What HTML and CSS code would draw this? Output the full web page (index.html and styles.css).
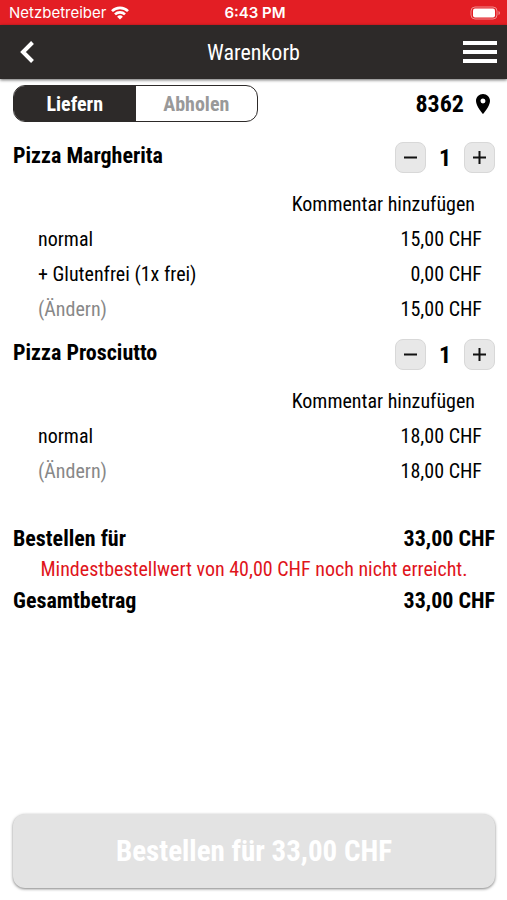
FILE: index.html
```html
<!DOCTYPE html>
<html lang="de">
<head>
  <meta charset="UTF-8">
  <meta name="viewport" content="width=device-width, initial-scale=1.0">
  <title>Warenkorb</title>
  <link rel="stylesheet" href="styles.css">
</head>
<body>
  <!-- Status bar -->
  <div class="statusbar">
    <span class="carrier">
      Netzbetreiber
      <svg width="18" height="14" viewBox="0 0 18 14" fill="none" stroke="#fff" stroke-width="2.6">
        <path d="M1 5.2a11.3 11.3 0 0 1 16 0"/>
        <path d="M4 8.4a7.1 7.1 0 0 1 10 0"/>
        <path d="M9 13.6l-2.9-2.9a4.1 4.1 0 0 1 5.8 0z" fill="#fff" stroke="none"/>
      </svg>
    </span>
    <span class="time">6:43 PM</span>
    <svg class="battery" width="31" height="14" viewBox="0 0 31 14">
      <rect x="1" y="1" width="26" height="12" rx="4" fill="none" stroke="#f08a8d"/>
      <rect x="3" y="2.500" width="22" height="9" rx="2" fill="#fff"/>
      <path d="M28.5 5v4q1.5-.6 1.5-2t-1.5-2z" fill="#f08a8d"/>
    </svg>
  </div>

  <!-- Header -->
  <header class="header">
    <button class="icon-btn" type="button" aria-label="Zurück">
      <svg width="16" height="24" viewBox="0 0 16 24" fill="none" stroke="#fff" stroke-width="4">
        <path d="M13.500 2.500L4 12l9.500 9.500"/>
      </svg>
    </button>
    <h1>Warenkorb</h1>
    <button class="icon-btn menu" type="button" aria-label="Menü">
      <svg width="34" height="24" viewBox="0 0 34 24" fill="#fff">
        <path d="M0 1h34v4H0zM0 10h34v4H0zM0 19h34v4H0z"/>
      </svg>
    </button>
  </header>

  <main class="cart">
    <div class="delivery">
      <div class="toggle">
        <button class="active" type="button">Liefern</button>
        <button type="button">Abholen</button>
      </div>
      <a class="location" href="#ort">
        8362
        <svg width="14" height="20" viewBox="5 2 14 20" fill="#000">
          <path d="M12 2C8.130 2 5 5.130 5 9c0 5.250 7 13 7 13s7-7.750 7-13c0-3.870-3.130-7-7-7zm0 9.500a2.500 2.500 0 0 1 0-5 2.500 2.500 0 0 1 0 5z"/>
        </svg>
      </a>
    </div>

    <!-- Items -->
    <section class="item">
      <div class="item-head">
        <h2>Pizza Margherita</h2>
        <div class="quantity">
          <button type="button" aria-label="Weniger"><svg width="13" height="13" viewBox="0 0 13 13"><path d="M0 6.500h13"/></svg></button>
          <span>1</span>
          <button type="button" aria-label="Mehr"><svg width="13" height="13" viewBox="0 0 13 13"><path d="M0 6.500h13M6.500 0v13"/></svg></button>
        </div>
      </div>
      <div class="comment"><a href="#kommentar">Kommentar hinzufügen</a></div>
      <div class="row"><span>normal</span><span>15,00 CHF</span></div>
      <div class="row"><span>+ Glutenfrei (1x frei)</span><span>0,00 CHF</span></div>
      <div class="row"><a class="change" href="#aendern">(Ändern)</a><span>15,00 CHF</span></div>
    </section>

    <section class="item">
      <div class="item-head">
        <h2>Pizza Prosciutto</h2>
        <div class="quantity">
          <button type="button" aria-label="Weniger"><svg width="13" height="13" viewBox="0 0 13 13"><path d="M0 6.500h13"/></svg></button>
          <span>1</span>
          <button type="button" aria-label="Mehr"><svg width="13" height="13" viewBox="0 0 13 13"><path d="M0 6.500h13M6.500 0v13"/></svg></button>
        </div>
      </div>
      <div class="comment"><a href="#kommentar">Kommentar hinzufügen</a></div>
      <div class="row"><span>normal</span><span>18,00 CHF</span></div>
      <div class="row"><a class="change" href="#aendern">(Ändern)</a><span>18,00 CHF</span></div>
    </section>

    <!-- Totals -->
    <section class="totals">
      <div class="total"><span>Bestellen für</span><span>33,00 CHF</span></div>
      <p class="warning">Mindestbestellwert von 40,00 CHF noch nicht erreicht.</p>
      <div class="total"><span>Gesamtbetrag</span><span>33,00 CHF</span></div>
    </section>

    <button class="order" type="button" disabled>Bestellen für 33,00 CHF</button>
  </main>
</body>
</html>
```
FILE: styles.css
```css
* {
  box-sizing: border-box;
}

body {
  margin: 0;
  min-height: 100vh;
  display: flex;
  flex-direction: column;
  background: #fff;
  color: #000;
  font-family: "Roboto Condensed", "Liberation Sans Narrow", Roboto, sans-serif;
  font-size: 20px;
}

h1, h2, p {
  margin: 0;
}

button {
  font-family: inherit;
  padding: 0;
  border: none;
  background: none;
}

a {
  color: inherit;
  text-decoration: none;
}

svg {
  display: block;
}

/* Status bar */
.statusbar {
  display: grid;
  grid-template-columns: 1fr auto 1fr;
  align-items: center;
  height: 25px;
  padding: 0 6px 0 9px;
  background: #e31e24;
  color: #fff;
  font-family: Inter, sans-serif;
  font-size: 15px;
}

.carrier {
  display: flex;
  align-items: center;
  gap: 5px;
}

.time {
  font-size: 15px;
  font-weight: 600;
}

.battery {
  justify-self: end;
}

/* Header */
.header {
  display: grid;
  grid-template-columns: 1fr auto 1fr;
  align-items: center;
  height: 54px;
  padding: 0 10px;
  background: #2d2a29;
  color: #fff;
  box-shadow: 0 1px 3px rgba(0, 0, 0, 0.6);
}

.header h1 {
  font-size: 22px;
  font-weight: 400;
}

.icon-btn {
  justify-self: start;
  padding-left: 9px;
}

.icon-btn.menu {
  justify-self: end;
}

/* Cart */
.cart {
  flex: 1;
  display: flex;
  flex-direction: column;
  padding: 6px 12px 12px 13px;
}

.delivery {
  display: flex;
  justify-content: space-between;
  align-items: center;
  margin-bottom: 7px;
}

.toggle {
  display: flex;
  width: 245px;
  height: 37px;
  border: 1px solid #2d2a29;
  border-radius: 12px;
  overflow: hidden;
}

.toggle button {
  flex: 1;
  color: #999;
  font-size: 20px;
  font-weight: 700;
}

.toggle .active {
  background: #2d2a29;
  color: #fff;
}

.location {
  display: flex;
  align-items: center;
  gap: 12px;
  padding-right: 5px;
  font-size: 24px;
  font-weight: 700;
}

.item-head {
  display: flex;
  justify-content: space-between;
  align-items: center;
  height: 57px;
}

.item-head h2 {
  padding-bottom: 4px;
  font-size: 22px;
}

.quantity {
  display: flex;
  align-items: center;
  font-size: 24px;
  font-weight: 700;
}

.quantity span {
  width: 38px;
  text-align: center;
}

.quantity button {
  display: flex;
  justify-content: center;
  align-items: center;
  width: 31px;
  height: 31px;
  border: 1px solid #d8d8d8;
  border-radius: 8px;
  background: #e8e8e8;
}

.quantity path {
  stroke: #111;
  stroke-width: 2;
}

.row,
.comment {
  display: flex;
  justify-content: space-between;
  align-items: center;
  height: 35px;
  padding: 0 13px 0 25px;
}

.comment {
  justify-content: flex-end;
  padding-right: 20px;
}

.change {
  color: #888;
}

/* Totals */
.totals {
  margin: 35px 0;
  line-height: 31px;
}

.total {
  display: flex;
  justify-content: space-between;
  font-size: 22px;
  font-weight: 700;
}

.warning {
  color: #e0141b;
  text-align: center;
}

.order {
  margin-top: auto;
  height: 74px;
  border-radius: 12px;
  background: #e3e3e3;
  color: #fff;
  font-size: 29px;
  font-weight: 700;
  box-shadow: 0 1px 3px rgba(0, 0, 0, 0.5);
}
```
